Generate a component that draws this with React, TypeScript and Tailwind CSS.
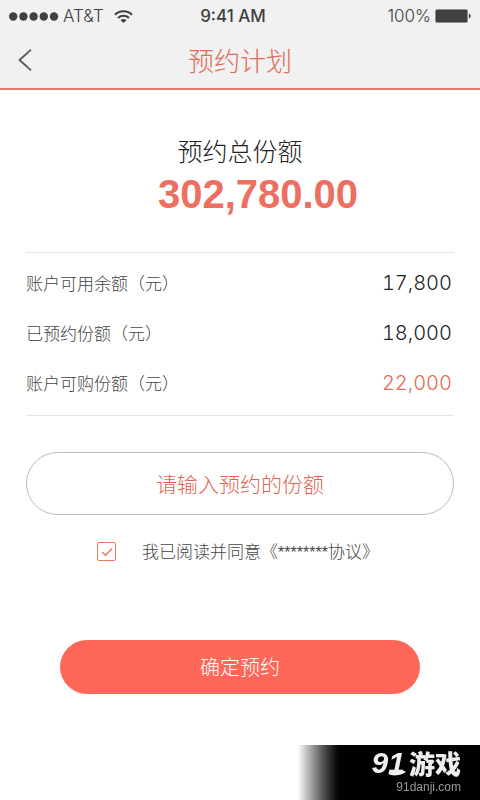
import React, { useState } from 'react';

interface BalanceRow {
    label: string;
    value: string;
    highlight?: boolean;
}

const rows: BalanceRow[] = [
    { label: '账户可用余额（元）', value: '17,800' },
    { label: '已预约份额（元）', value: '18,000' },
    { label: '账户可购份额（元）', value: '22,000', highlight: true },
];

const SignalIcon = () => <svg className="h-[9px] w-[50px]" viewBox="0 0 50 9" fill="#404040"><circle cx="4.2" cy="4.5" r="4.2" /><circle cx="14.4" cy="4.5" r="4.2" /><circle cx="24.6" cy="4.5" r="4.2" /><circle cx="34.8" cy="4.5" r="4.2" /><circle cx="45" cy="4.5" r="4.2" /></svg>;
const WifiIcon = () => <svg className="h-[13px] w-[19px]" viewBox="0 0 19 13" fill="none" stroke="#404040" strokeWidth="2"><path d="M1 4.8a12.2 12.2 0 0117 0" /><path d="M4 8a8 8 0 0111 0" /><path d="M6.5 10.2a4.6 4.6 0 016 0L9.500 13z" fill="#404040" stroke="none" /></svg>;
const BatteryIcon = () => <svg className="h-[14px] w-[36px]" viewBox="0 0 36 14"><rect x="0.5" y="0.5" width="32" height="13" rx="1.5" fill="#404040" stroke="#8e8e8e" /><path d="M33.800 4.500c1.300.5 1.900 1.400 1.900 2.500s-.6 2-1.900 2.500z" fill="#404040" /></svg>;
const BackIcon = () => <svg className="h-[22px] w-[14px]" viewBox="0 0 14 22" fill="none" stroke="#555" strokeWidth="1.800"><path d="M13 .7L1.500 11 13 21.300" /></svg>;
const CheckIcon = () => <svg className="pointer-events-none absolute inset-0 h-[19px] w-[19px]" viewBox="0 0 19 19" fill="none" stroke="#e8795c" strokeWidth="1.500"><path d="M5 10l3.500 3.300L15 6.500" /></svg>;

const StatusBar = () => (
    <div className="grid h-8 grid-cols-[1fr_auto_1fr] items-center px-[9px] font-['Inter',sans-serif] text-[17px] leading-8 text-[#404040]">
        <div className="flex items-center gap-1">
            <SignalIcon />
            <span className="font-light">AT&amp;T</span>
            <span className="ml-1.5"><WifiIcon /></span>
        </div>
        <span className="mr-3.5 font-medium">9:41 AM</span>
        <div className="flex items-center justify-end gap-1">
            <span>100%</span>
            <BatteryIcon />
        </div>
    </div>
);

const SiteBadge = () => (
    <div className="fixed right-0 bottom-0 flex h-[55px] w-[182px] flex-col items-end justify-center bg-linear-to-r from-white to-black to-25% pr-[19px]">
        <div className="flex h-6 items-center gap-1 text-[#eee]">
            <span className="relative font-['Liberation_Sans',sans-serif] text-[30px] leading-6 font-bold italic">
                91
                <svg className="absolute -right-px -bottom-px h-[6px] w-[18px]" viewBox="0 0 18 6" fill="#eee"><path d="M0 3.500C4 1 13 0 18 1.500 16 4.500 5 7.500 0 3.500z" /></svg>
            </span>
            <span className="text-[26px] leading-6 font-black">游戏</span>
        </div>
        <span className="pt-1 font-['Liberation_Sans',sans-serif] text-xs leading-4 text-[#999]">91danji.com</span>
    </div>
);

export default function App() {
    const [agreed, setAgreed] = useState(true);
    const [amount, setAmount] = useState('');

    return (
        <div className="min-h-screen bg-white font-['Noto_Sans_CJK_SC',sans-serif] font-light">
            <header className="border-b-2 border-[#e8786d] bg-[#f1f1f1]">
                <StatusBar />
                <div className="grid h-14 grid-cols-[1fr_auto_1fr] items-center px-[18px]">
                    <button type="button" aria-label="返回" className="flex w-8 cursor-pointer"><BackIcon /></button>
                    <h1 className="text-[26px] leading-10 text-[#e06b57]">预约计划</h1>
                </div>
            </header>

            <main className="px-[26px] pt-10 pb-24">
                <div className="text-center">
                    <h2 className="text-[25px] leading-10 text-[#222]">预约总份额</h2>
                    <p className="pl-9 font-['Liberation_Sans',sans-serif] text-[40px] leading-12 font-bold text-[#ec6f61]">302,780.00</p>
                </div>

                <dl className="mt-[34px] border-y border-[#e6e6e6] pt-[5px] pb-[7px]">
                    {rows.map((row) => (
                        <div key={row.label} className="flex h-[50px] items-center justify-between pr-0.5">
                            <dt className="text-[17px] text-[#444]">{row.label}</dt>
                            <dd className={`font-['Inter',sans-serif] text-xl tabular-nums ${row.highlight ? 'text-[#e06b57]' : 'text-[#222]'}`}>{row.value}</dd>
                        </div>
                    ))}
                </dl>

                <input
                    type="text"
                    inputMode="numeric"
                    aria-label="预约的份额"
                    placeholder="请输入预约的份额"
                    value={amount}
                    onChange={(e) => setAmount(e.target.value)}
                    className="mt-9 block h-[63px] w-full rounded-full border border-[#bbb] px-8 pb-0.5 text-center text-[21px] text-[#dd6654] outline-none placeholder:text-[#dd6654]"
                />

                <label className="mt-6 flex h-6 items-center justify-center gap-[26px] pr-1 text-[17px] leading-6 text-[#444]">
                    <span className="relative h-[19px] w-[19px]">
                        <input
                            type="checkbox"
                            checked={agreed}
                            onChange={(e) => setAgreed(e.target.checked)}
                            className="block h-[19px] w-[19px] appearance-none rounded-xs border border-[#e8795c]"
                        />
                        {agreed && <CheckIcon />}
                    </span>
                    <span>我已阅读并同意《<span className="font-['Liberation_Sans',sans-serif] text-base leading-none">********</span>协议》</span>
                </label>

                <div className="px-[34px]">
                    <button type="button" className="mt-[77px] h-[54px] w-full cursor-pointer rounded-full bg-[#ff6859] text-xl text-white">
                        确定预约
                    </button>
                </div>
            </main>

            <SiteBadge />
        </div>
    );
}
